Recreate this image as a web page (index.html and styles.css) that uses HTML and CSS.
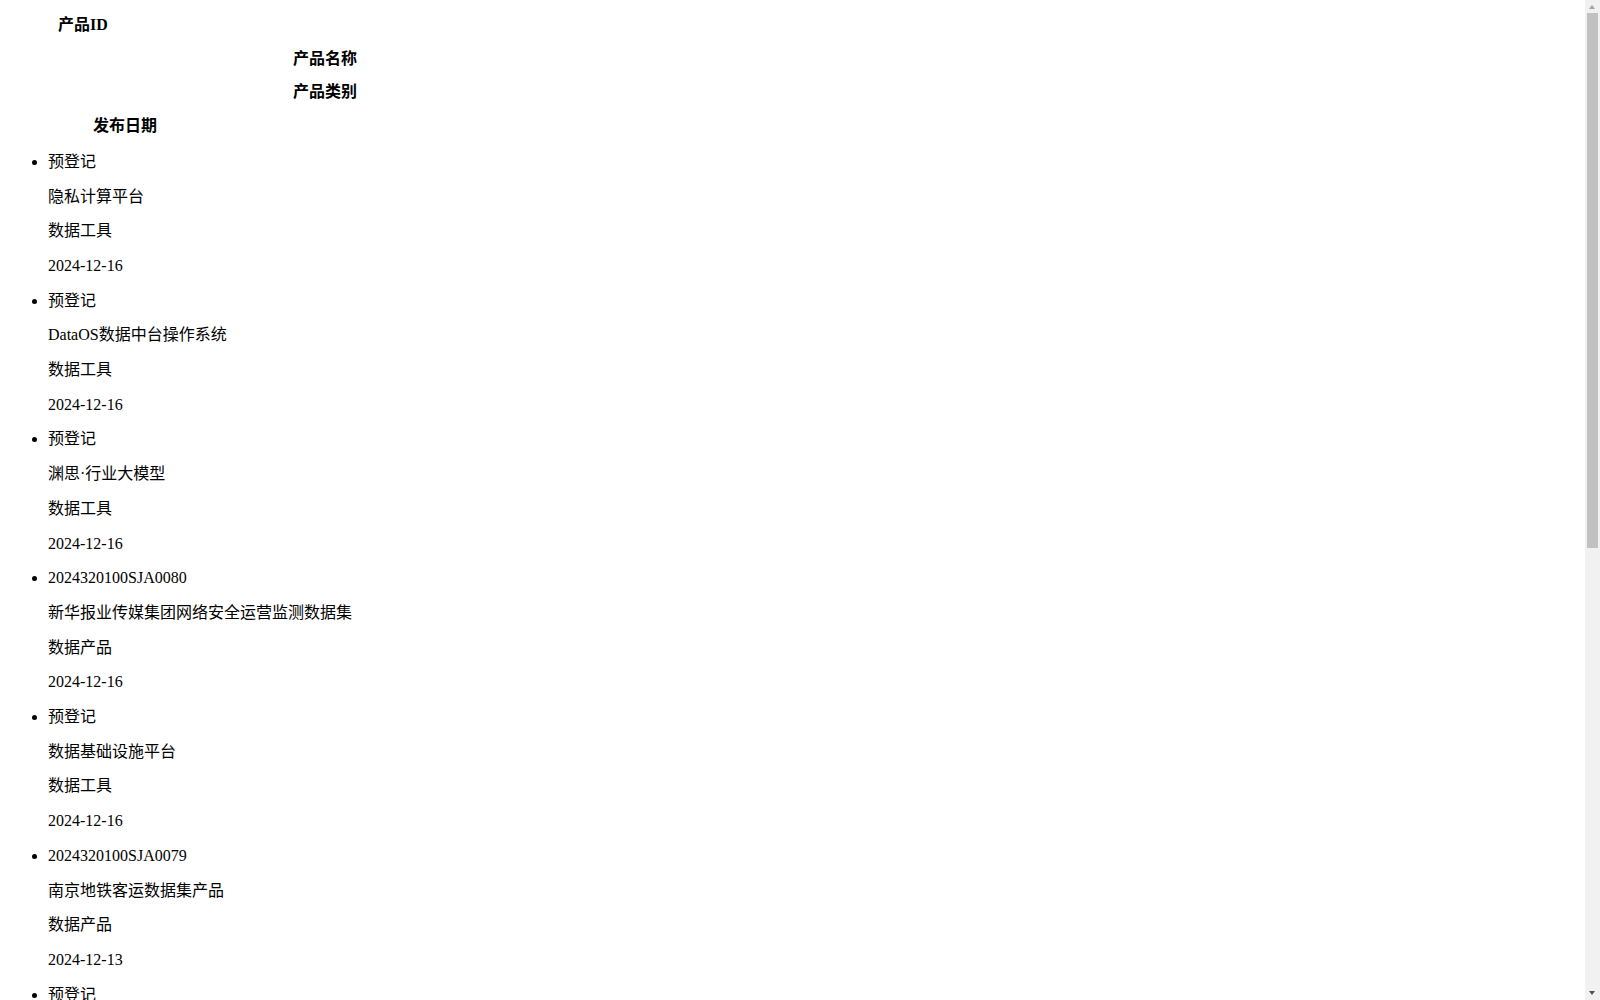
FILE: index.html
```html
<!DOCTYPE html>
<html lang="zh-CN">
<head>
<meta charset="utf-8">
<title>产品列表</title>
<link rel="stylesheet" href="styles.css">
</head>
<body>
<div class="thead">
  <div class="th th-id">产品ID</div>
  <div class="th th-name">产品名称</div>
  <div class="th th-cat">产品类别</div>
  <div class="th th-date">发布日期</div>
</div>
<ul class="list">
  <li class="row"><p class="cell">预登记</p><p class="cell">隐私计算平台</p><p class="cell">数据工具</p><p class="cell">2024-12-16</p></li>
  <li class="row"><p class="cell">预登记</p><p class="cell">DataOS数据中台操作系统</p><p class="cell">数据工具</p><p class="cell">2024-12-16</p></li>
  <li class="row"><p class="cell">预登记</p><p class="cell">渊思·行业大模型</p><p class="cell">数据工具</p><p class="cell">2024-12-16</p></li>
  <li class="row"><p class="cell">2024320100SJA0080</p><p class="cell">新华报业传媒集团网络安全运营监测数据集</p><p class="cell">数据产品</p><p class="cell">2024-12-16</p></li>
  <li class="row"><p class="cell">预登记</p><p class="cell">数据基础设施平台</p><p class="cell">数据工具</p><p class="cell">2024-12-16</p></li>
  <li class="row"><p class="cell">2024320100SJA0079</p><p class="cell">南京地铁客运数据集产品</p><p class="cell">数据产品</p><p class="cell">2024-12-13</p></li>
  <li class="row"><p class="cell">预登记</p><p class="cell">智能数据治理平台</p><p class="cell">数据工具</p><p class="cell">2024-12-13</p></li>
  <li class="row"><p class="cell">2024320100SJA0078</p><p class="cell">南京公交客流数据集产品</p><p class="cell">数据产品</p><p class="cell">2024-12-12</p></li>
  <li class="row"><p class="cell">预登记</p><p class="cell">数据安全管理平台</p><p class="cell">数据工具</p><p class="cell">2024-12-12</p></li>
  <li class="row"><p class="cell">2024320100SJA0077</p><p class="cell">江苏气象服务数据集</p><p class="cell">数据产品</p><p class="cell">2024-12-11</p></li>
  <li class="row"><p class="cell">预登记</p><p class="cell">数据资产运营平台</p><p class="cell">数据工具</p><p class="cell">2024-12-11</p></li>
  <li class="row"><p class="cell">2024320100SJA0076</p><p class="cell">南京城市交通路况数据集</p><p class="cell">数据产品</p><p class="cell">2024-12-10</p></li>
</ul>
<div class="scrollbar" aria-hidden="true">
  <span class="sb-arrow sb-up"></span>
  <span class="sb-thumb"></span>
  <span class="sb-arrow sb-down"></span>
</div>
</body>
</html>
```

FILE: styles.css
```css
html {
  background: #ffffff;
}
body {
  margin: 8px;
  font-family: "Liberation Serif", "Noto Sans CJK SC", serif;
  font-size: 16px;
  line-height: 18.7px;
  color: #000000;
}
.thead {
  padding-top: 8px;
}
.th {
  font-weight: bold;
  margin: 0 0 15px 0;
}
.th-id {
  padding-left: 50px;
}
.th-name {
  padding-left: 285px;
}
.th-cat {
  padding-left: 285px;
}
.th-date {
  padding-left: 85px;
  margin-bottom: 17px;
}
.list {
  margin: 0 0 16px 0;
  padding-left: 40px;
  list-style: disc;
}
.row {
  margin: 0;
}
.cell {
  margin: 16px 0;
}
.row:first-child .cell:first-child {
  margin-top: 0;
}

/* decorative window scrollbar, as in the screenshot */
.scrollbar {
  position: fixed;
  top: 0;
  right: 0;
  width: 15px;
  height: 100vh;
  background: #f1f1f1;
}
.sb-thumb {
  position: absolute;
  top: 13px;
  left: 2px;
  width: 11px;
  height: 535px;
  background: #c1c1c1;
}
.sb-arrow {
  position: absolute;
  left: 4px;
  width: 0;
  height: 0;
  border-left: 3.5px solid transparent;
  border-right: 3.5px solid transparent;
}
.sb-up {
  top: 5px;
  border-bottom: 4px solid #a3a3a3;
}
.sb-down {
  bottom: 5px;
  border-top: 4px solid #505050;
}
```
